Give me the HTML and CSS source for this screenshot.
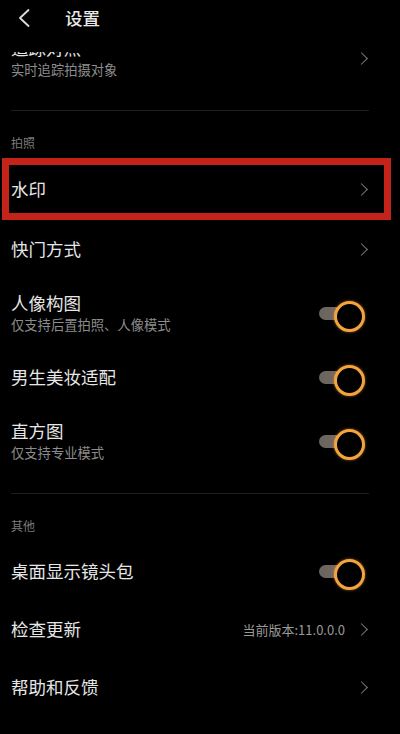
FILE: index.html
```html
<!DOCTYPE html>
<html lang="zh-CN">

<head>
    <meta charset="UTF-8">
    <meta name="viewport" content="width=device-width, initial-scale=1.0">
    <title>设置</title>
    <link rel="stylesheet" href="styles.css">
</head>

<body>
    <div class="page">
        <div class="header">
            <svg class="back" width="12" height="18" viewBox="0 0 12 18">
                <path d="M10.5 1 L2 9 L10.5 17" fill="none" stroke="#dcdcdc" stroke-width="1.8" stroke-linecap="round" stroke-linejoin="round" />
            </svg>
            <h1 class="title">设置</h1>
        </div>

        <div class="scroll">
            <div class="list">

                <div class="group">
                    <div class="row double">
                        <div class="text">
                            <div class="name">追踪对焦</div>
                            <div class="sub">实时追踪拍摄对象</div>
                        </div>
                        <span class="chevron"></span>
                    </div>
                </div>

                <div class="group">
                    <div class="label">拍照</div>
                    <div class="row marked">
                        <div class="name">水印</div>
                        <span class="chevron"></span>
                    </div>
                    <div class="row">
                        <div class="name">快门方式</div>
                        <span class="chevron"></span>
                    </div>
                    <div class="row double">
                        <div class="text">
                            <div class="name">人像构图</div>
                            <div class="sub">仅支持后置拍照、人像模式</div>
                        </div>
                        <span class="switch"></span>
                    </div>
                    <div class="row">
                        <div class="name">男生美妆适配</div>
                        <span class="switch"></span>
                    </div>
                    <div class="row double">
                        <div class="text">
                            <div class="name">直方图</div>
                            <div class="sub">仅支持专业模式</div>
                        </div>
                        <span class="switch"></span>
                    </div>
                </div>

                <div class="group dense">
                    <div class="label">其他</div>
                    <div class="row">
                        <div class="name">桌面显示镜头包</div>
                        <span class="switch"></span>
                    </div>
                    <div class="row">
                        <div class="name">检查更新</div>
                        <span class="value">当前版本:11.0.0.0</span>
                        <span class="chevron"></span>
                    </div>
                    <div class="row">
                        <div class="name">帮助和反馈</div>
                        <span class="chevron"></span>
                    </div>
                </div>

            </div>
        </div>
    </div>
</body>

</html>
```

FILE: styles.css
```css
* {
    padding: 0;
    margin: 0;
    box-sizing: border-box;
    font-family: "Noto Sans CJK SC", "Noto Sans", sans-serif;
}

body {
    background-color: #000;
}

.page {
    width: 400px;
    height: 734px;
    display: flex;
    flex-direction: column;
    background-color: #000;
    overflow: hidden;
}

/* top bar */
.header {
    height: 52px;
    flex-shrink: 0;
    display: flex;
    align-items: flex-start;
    padding: 6px 0 0 18px;
    background-color: #000;
}

.back {
    margin-top: 3px;
}

.title {
    margin-left: 35px;
    font-size: 17.5px;
    line-height: 24px;
    font-weight: 500;
    color: #e8e8e8;
}

/* list, scrolled a little so the first row is cut */
.scroll {
    flex: 1;
    overflow: hidden;
}

.list {
    margin-top: -28px;
}

.group {
    padding-bottom: 18px;
    border-bottom: 1px solid #1f1f1f;
    margin: 0 31px 0 11px;
}

.group:last-child {
    border-bottom: none;
}

.label {
    padding: 24px 0 8px 0;
    font-size: 12px;
    line-height: 16px;
    color: #7a7a7a;
}

.row {
    position: relative;
    height: 60px;
    display: flex;
    align-items: center;
}

.dense .row {
    height: 58px;
}

.row.double {
    height: 68px;
}

.text {
    flex: 1;
    display: flex;
    flex-direction: column;
    gap: 2px;
}

.name {
    flex: 1;
    font-size: 17.5px;
    line-height: 22px;
    color: #e6e6e6;
}

.text .name {
    flex: none;
}

.sub {
    font-size: 13.3px;
    line-height: 18px;
    color: #8c8c8c;
}

.value {
    font-size: 13px;
    color: #9a9a9a;
    margin-right: 12px;
}

.chevron {
    width: 9px;
    height: 9px;
    border-top: 1.5px solid #7c7c7c;
    border-right: 1.5px solid #7c7c7c;
    transform: rotate(45deg);
    margin-right: 3px;
}

/* orange ring switch */
.switch {
    position: relative;
    width: 46px;
    height: 26px;
    margin-right: 4px;
}

.switch::before {
    content: "";
    position: absolute;
    left: 0;
    top: 6.5px;
    width: 34px;
    height: 13px;
    border-radius: 6.5px;
    background: linear-gradient(90deg, #6a6560, #7a6a5c);
}

.switch::after {
    content: "";
    position: absolute;
    right: 0;
    top: 0.5px;
    width: 25px;
    height: 25px;
    border-radius: 50%;
    border: 3.5px solid #f4a43e;
    background-color: #000;
    box-shadow: 0 0 3px rgba(244, 164, 62, 0.6);
}

/* red annotation frame */
.marked::after {
    content: "";
    position: absolute;
    left: -9px;
    right: -22px;
    top: -1px;
    bottom: -1px;
    border: 7px solid #c4231a;
}
```
